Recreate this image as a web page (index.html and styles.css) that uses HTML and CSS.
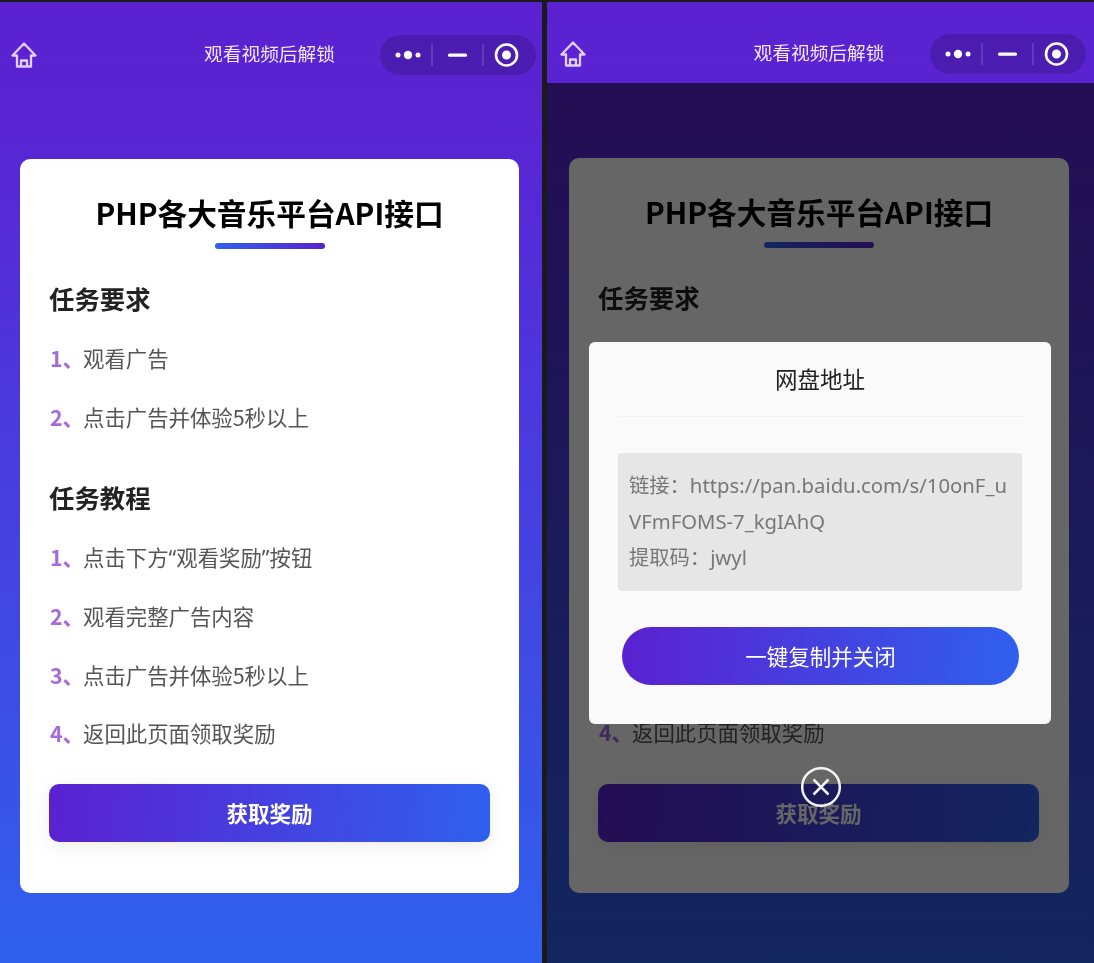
FILE: index.html
```html
<!DOCTYPE html>
<html lang="zh-CN">
<head>
<meta charset="utf-8">
<title>观看视频后解锁</title>
<link rel="stylesheet" href="styles.css">
</head>
<body>
<main class="stage">
  <section class="phone phone-left">
    <header class="nav">
      <svg class="home" viewBox="0 0 26 26"><path d="M13 1.5 1.5 13.5H6V24.5H20V13.5H24.5ZM10 24.5V18.5H16V24.5"/></svg>
      <h2 class="nav-title">观看视频后解锁</h2>
      <svg class="capsule" viewBox="0 0 156 40"><rect class="cap-bg" width="156" height="40" rx="20"/><circle cx="18" cy="20" r="2.5"/><circle cx="28" cy="20" r="4.2"/><circle cx="38" cy="20" r="2.5"/><path class="cap-sep" d="M52 9V31M103 9V31"/><rect x="68" y="18.5" width="19" height="3.2" rx="1.5"/><circle class="cap-ring" cx="126.5" cy="20" r="10.5"/><circle cx="126.5" cy="20" r="4.5"/></svg>
    </header>
    <article class="card">
      <h1 class="card-title">PHP各大音乐平台API接口</h1>
      <div class="rule"></div>
      <h3 class="section first">任务要求</h3>
      <ul class="steps">
        <li><b>1、</b>观看广告</li>
        <li><b>2、</b>点击广告并体验5秒以上</li>
      </ul>
      <h3 class="section">任务教程</h3>
      <ul class="steps">
        <li><b>1、</b>点击下方<span class="quote">“</span>观看奖励<span class="quote">”</span>按钮</li>
        <li><b>2、</b>观看完整广告内容</li>
        <li><b>3、</b>点击广告并体验5秒以上</li>
        <li><b>4、</b>返回此页面领取奖励</li>
      </ul>
      <button class="cta">获取奖励</button>
    </article>
  </section>

  <section class="phone phone-right">
    <header class="nav">
      <svg class="home" viewBox="0 0 26 26"><path d="M13 1.5 1.5 13.5H6V24.5H20V13.5H24.5ZM10 24.5V18.5H16V24.5"/></svg>
      <h2 class="nav-title">观看视频后解锁</h2>
      <svg class="capsule" viewBox="0 0 156 40"><rect class="cap-bg" width="156" height="40" rx="20"/><circle cx="18" cy="20" r="2.5"/><circle cx="28" cy="20" r="4.2"/><circle cx="38" cy="20" r="2.5"/><path class="cap-sep" d="M52 9V31M103 9V31"/><rect x="68" y="18.5" width="19" height="3.2" rx="1.5"/><circle class="cap-ring" cx="126.5" cy="20" r="10.5"/><circle cx="126.5" cy="20" r="4.5"/></svg>
    </header>
    <article class="card">
      <h1 class="card-title">PHP各大音乐平台API接口</h1>
      <div class="rule"></div>
      <h3 class="section first">任务要求</h3>
      <ul class="steps">
        <li><b>1、</b>观看广告</li>
        <li><b>2、</b>点击广告并体验5秒以上</li>
      </ul>
      <h3 class="section">任务教程</h3>
      <ul class="steps">
        <li><b>1、</b>点击下方<span class="quote">“</span>观看奖励<span class="quote">”</span>按钮</li>
        <li><b>2、</b>观看完整广告内容</li>
        <li><b>3、</b>点击广告并体验5秒以上</li>
        <li><b>4、</b>返回此页面领取奖励</li>
      </ul>
      <button class="cta">获取奖励</button>
    </article>
    <div class="overlay">
      <div class="modal">
        <h3 class="modal-title">网盘地址</h3>
        <div class="modal-rule"></div>
        <p class="link-box">链接：https://pan.baidu.com/s/10onF_uVFmFOMS-7_kgIAhQ<br>提取码：jwyl</p>
        <button class="copy">一键复制并关闭</button>
      </div>
      <svg class="close" viewBox="0 0 40 40"><circle cx="20" cy="20" r="18.8"/><path d="M12.5 12.5 27.5 27.5M27.5 12.5 12.5 27.5"/></svg>
    </div>
  </section>
</main>
</body>
</html>
```

FILE: styles.css
```css
* { box-sizing: border-box; }
html, body { margin: 0; height: 100%; }
body {
  background: #1a1a1a;
  font-family: "Noto Sans CJK SC", "Noto Sans", sans-serif;
  overflow: hidden;
}
.stage {
  display: flex;
  justify-content: space-between;
  width: 1094px;
  height: 963px;
  padding-top: 2px;
  filter: blur(.35px);
}
.phone {
  position: relative;
  height: 961px;
  background: linear-gradient(180deg, #5b21d1 0%, #5a24d3 12%, #2f60ee 100%);
  overflow: hidden;
}
.phone-left { width: 542px; padding: 1px 3px 0 0; }
.phone-right { width: 547px; padding: 0 5px 0 2px; }

.nav {
  display: grid;
  grid-template-columns: 1fr auto 1fr;
  align-items: center;
  height: 81px;
  padding: 32px 3px 9px;
}
.home {
  width: 26px;
  height: 26px;
  margin-left: 8px;
  fill: none;
  stroke: #e2d0ff;
  stroke-width: 2.3;
  stroke-linejoin: round;
}
.nav-title {
  margin: 0;
  color: #f1e8ff;
  font-size: 18.7px;
  font-weight: 400;
  line-height: 26px;
  white-space: nowrap;
  transform: translateY(-2px);
}
.capsule {
  justify-self: end;
  width: 156px;
  height: 40px;
  fill: #fff;
}
.cap-bg { fill: rgba(0, 0, 0, .16); }
.cap-sep { fill: none; stroke: rgba(255, 255, 255, .18); stroke-width: 1.5; }
.cap-ring { fill: none; stroke: #fff; stroke-width: 2.6; }

.card {
  height: 735px;
  margin: 75px 20px 0;
  padding: 34px 29px 0;
  background: #fff;
  border-radius: 10px;
}
.phone-left .card { height: 734px; }
.card-title {
  margin: 0;
  color: #000;
  font-size: 29.7px;
  font-weight: 700;
  line-height: 40px;
  text-align: center;
  white-space: nowrap;
}
.rule {
  width: 110px;
  height: 6px;
  margin: 10px auto 0;
  border-radius: 3px;
  background: linear-gradient(90deg, #2f60ee, #5b21d1);
}
.section {
  margin: 48px 0 0;
  color: #222;
  font-size: 25.4px;
  font-weight: 700;
  line-height: 34px;
}
.section.first { margin-top: 32px; }
.steps {
  display: flex;
  flex-direction: column;
  gap: 28.5px;
  margin: 28px 0 0;
  padding: 0;
  list-style: none;
}
.steps li {
  padding-left: 1px;
  color: #555;
  font-size: 21.4px;
  line-height: 30px;
}
.steps b {
  margin-right: -1px;
  color: #a56bdc;
  font-weight: 700;
}
.quote { font-family: "Noto Sans", sans-serif; }
.cta {
  display: block;
  width: 441px;
  height: 58px;
  margin-top: 36px;
  padding: 0;
  border: 0;
  border-radius: 10px;
  background: linear-gradient(95deg, #5b21d1, #2f60ee);
  box-shadow: 0 4px 18px rgba(0, 0, 0, .08);
  color: #fff;
  font: 700 21.5px/58px "Noto Sans CJK SC", "Noto Sans", sans-serif;
}
.phone-right .cta { margin-top: 37px; }

.overlay {
  position: absolute;
  inset: 81px 0 0;
  display: flex;
  flex-direction: column;
  align-items: center;
  padding: 259px 1px 0 0;
  background: rgba(0, 0, 0, .6);
}
.modal {
  width: 462px;
  height: 382px;
  padding: 21px 29px 0;
  background: #fafafa;
  border-radius: 6px;
}
.modal-title {
  margin: 0;
  color: #222;
  font-size: 22.5px;
  font-weight: 400;
  line-height: 30px;
  text-align: center;
}
.modal-rule {
  width: 406px;
  height: 1px;
  margin-top: 23px;
  background: #f0f0f0;
}
.link-box {
  width: 404px;
  height: 138px;
  margin: 36px 0 0;
  padding: 14px 11px;
  border-radius: 4px;
  background: #e6e6e6;
  color: #777;
  font-family: "Noto Sans", "Noto Sans CJK SC", sans-serif;
  font-size: 20.3px;
  line-height: 36px;
  word-break: break-all;
}
.copy {
  display: block;
  width: 397px;
  height: 58px;
  margin: 36px 0 0 4px;
  padding: 0;
  border: 0;
  border-radius: 29px;
  background: linear-gradient(95deg, #5b21d1, #2f60ee);
  color: #fff;
  font: 400 21.5px/58px "Noto Sans CJK SC", "Noto Sans", sans-serif;
}
.close {
  flex: none;
  width: 40px;
  height: 40px;
  margin: 43px 0 0 2px;
  fill: none;
  stroke: #f2f2f2;
  stroke-width: 2.5;
}
```
